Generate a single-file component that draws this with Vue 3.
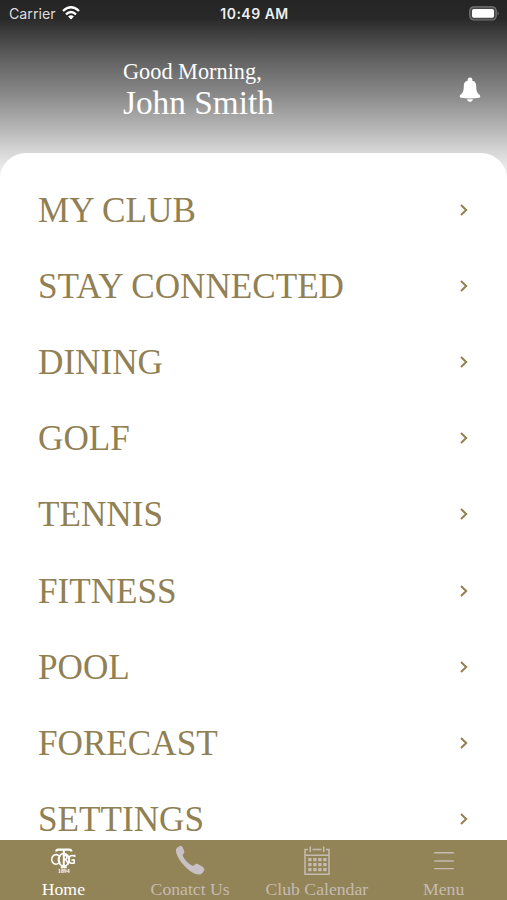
<template>
  <div class="screen">
    <header class="header">
      <div class="status">
        <div class="carrier">
          <span>Carrier</span>
          <svg class="wifi" viewBox="0 0 18 14">
            <path d="M1 5 Q9 -2.4 17 5" />
            <path d="M4 8.3 Q9 3.8 14 8.3" />
            <path class="dot" d="M6.1 10.5 Q9 8.2 11.9 10.5 L9 13.6 Z" />
          </svg>
        </div>
        <div class="time">10:49 AM</div>
        <svg class="battery" viewBox="0 0 31 15">
          <rect x="0.8" y="0.8" width="26.4" height="13.2" rx="4" fill="#484848" stroke="#777" stroke-width="1.2" />
          <rect x="3" y="3" width="22" height="8.8" rx="1.8" fill="#fff" />
          <path d="M28.6 5.2 Q30.8 7.4 28.6 9.6 Z" fill="#777" />
        </svg>
      </div>
      <div class="greeting">
        <div class="hello">Good Morning,</div>
        <div class="name">John Smith</div>
        <svg class="bell" viewBox="0 0 22 26">
          <circle cx="11" cy="2.8" r="2.4" />
          <path d="M11 3.6 C15 3.2 17.2 5.5 17.2 9 C17.2 15 18.6 16.6 20.8 18 Q22 20.6 20 20.8 Q11 22.2 2 20.8 Q0 20.6 1.2 18 C3.4 16.6 4.8 15 4.8 9 C4.8 5.5 7 3.2 11 3.6 Z" />
          <path d="M8 22.2 H14 Q13.4 25 11 25 Q8.6 25 8 22.2 Z" />
        </svg>
      </div>
    </header>

    <main class="list">
      <div v-for="item in items" :key="item" class="row">
        <span>{{ item }}</span>
        <svg class="chevron" viewBox="0 0 10 14"><path d="M2 2 L7.2 7 L2 12" /></svg>
      </div>
    </main>

    <nav class="tabs">
      <div v-for="tab in tabs" :key="tab.id" class="tab" :class="{ active: tab.id === current }" @click="current = tab.id">
        <svg v-if="tab.id === 'home'" class="icon" viewBox="0 0 30 30">
          <g fill="none" stroke="currentColor" stroke-width="1.6">
            <path d="M8.2 5.4 Q8.2 3.6 10.5 3.6 H21 Q23.4 3.6 23.4 5.4" stroke-width="2.2" />
            <path d="M15.8 4 V21.3 M12.8 21.3 H18.8" stroke-width="2" />
            <path d="M10.8 9.8 A4.2 4.8 0 1 0 10.8 17" />
            <ellipse cx="15.8" cy="13.8" rx="5.4" ry="6.3" />
            <path d="M12.2 9.4 Q9.6 13.4 12.2 17.4" />
            <path d="M16 9.5 H18.2 Q20 11.5 18 13.4 H16 M17.4 13.4 L20.8 18.2" />
            <path d="M26.6 11 V8.8 M26.4 10 Q21 8.2 20.8 13.4 Q21 18.4 26.2 17 V14 H23.4" />
          </g>
          <text x="15.8" y="27.3" text-anchor="middle" class="year">1894</text>
        </svg>
        <svg v-else-if="tab.id === 'contact'" class="icon phone" viewBox="0 0 30 30">
          <path fill="currentColor" d="M1 4.8 C1.2 2.8 4.2 0.8 6.2 1 C7.8 1.8 9.5 5.8 9.3 7.4 C8.8 9 7.2 9.2 7.8 10.8 C9.2 14.8 14 19.4 17.6 20.8 C19.4 21.2 19.5 19 21.2 18.8 C23.2 18.8 27.6 21.6 29.2 23.4 C30 25.5 27 29.5 23.8 29.6 C15 29.6 0.3 13 1 4.8 Z" />
        </svg>
        <svg v-else-if="tab.id === 'calendar'" class="icon" viewBox="0 0 30 30">
          <g fill="none" stroke="currentColor" stroke-width="1.5">
            <path d="M6 3.5 H3 V28.2 H27 V3.5 H24 M10.5 3.5 H19.5 M3 9.2 H27" />
            <path d="M8.3 0.5 V6 M21.7 0.5 V6" />
          </g>
          <g fill="currentColor">
            <template v-for="r in 3" :key="r">
              <rect v-for="c in 4" :key="c" :x="1.2 + c * 5" :y="7 + r * 5" width="3.4" height="3.2" rx="0.6" />
            </template>
          </g>
        </svg>
        <svg v-else class="icon" viewBox="0 0 30 30">
          <path d="M5.2 6.8 H24.8 M5.2 15 H24.8 M5.2 22.6 H24.8" fill="none" stroke="currentColor" stroke-width="1.4" />
        </svg>
        <span>{{ tab.label }}</span>
      </div>
    </nav>
  </div>
</template>

<script setup>
import { ref } from 'vue'

const current = ref('home')

const items = ['MY CLUB', 'STAY CONNECTED', 'DINING', 'GOLF', 'TENNIS', 'FITNESS', 'POOL', 'FORECAST', 'SETTINGS']

const tabs = [
  { id: 'home', label: 'Home' },
  { id: 'contact', label: 'Conatct Us' },
  { id: 'calendar', label: 'Club Calendar' },
  { id: 'menu', label: 'Menu' },
]
</script>

<style>
body { margin: 0; }
</style>

<style scoped>
.screen {
  display: flex; flex-direction: column; width: 507px; height: 900px; overflow: hidden;
  font-family: "Liberation Serif", "Times New Roman", serif;
  background: linear-gradient(#252525 0, #282828 18px, #454545 38px, #646464 62px, #8c8c8c 97px, #b4b4b4 127px, #d4d4d4 150px, #f4f4f4 176px);
}
.header { height: 153px; flex: none; color: #fff; }
.status { display: grid; grid-template-columns: 1fr auto 1fr; align-items: center; height: 27px; padding: 0 7px 0 9px; font-family: Inter, "Liberation Sans", sans-serif; }
.carrier { display: flex; align-items: center; gap: 6px; font-size: 14.2px; color: #ddd; }
.wifi { width: 18px; height: 14px; margin-top: -1px; fill: none; stroke: #fff; stroke-width: 2.3; }
.wifi .dot { fill: #fff; stroke: none; }
.time { font-size: 14px; font-weight: 600; letter-spacing: 0.5px; color: #eee; }
.battery { width: 31px; height: 15px; justify-self: end; margin-top: -1px; }
.greeting { position: relative; padding: 32px 0 0 123px; }
.hello { font-size: 22.3px; line-height: 26px; }
.name { font-size: 33.3px; line-height: 35px; }
.bell { position: absolute; left: 459px; top: 50px; width: 22px; height: 26px; fill: #fff; }
.list { flex: 1; min-height: 0; overflow: hidden; background: #fff; border-radius: 26px 26px 0 0; padding: 19.3px 38px 0; }
.row { display: flex; align-items: center; justify-content: space-between; height: 76.15px; font-size: 35.15px; line-height: 76px; color: #908053; }
.row span { padding-top: 1px; }
.chevron { width: 10px; height: 14px; margin-bottom: 1px; fill: none; stroke: #908053; stroke-width: 2; }
.tabs { flex: none; display: grid; grid-template-columns: repeat(4, 1fr); height: 60px; background: #938458; }
.tab { display: flex; flex-direction: column; align-items: center; padding-top: 6px; color: #c5bbb2; font-size: 17.7px; line-height: 20px; white-space: nowrap; cursor: pointer; }
.tab.active { color: #fff; }
.icon { width: 30px; height: 30px; margin-bottom: 3px; }
.phone { color: #c9c1c6; margin-top: -1px; margin-bottom: 4px; }
.year { font-size: 5.8px; font-weight: bold; fill: currentColor; }
</style>
